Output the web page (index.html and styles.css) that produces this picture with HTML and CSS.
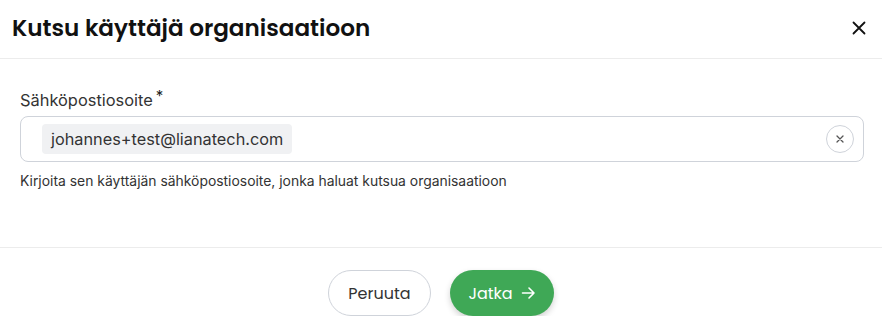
FILE: index.html
```html
<!DOCTYPE html>
<html lang="fi">
<head>
<meta charset="utf-8">
<title>Kutsu käyttäjä organisaatioon</title>
<link rel="stylesheet" href="styles.css">
</head>
<body>
<div class="modal">
  <header class="modal-header">
    <h1 class="modal-title">Kutsu käyttäjä organisaatioon</h1>
    <button class="close-btn" aria-label="Sulje">
      <svg width="14" height="14" viewBox="0 0 14 14"><path d="M1.5 1.5L12.5 12.5M12.5 1.5L1.5 12.5" stroke="#111" stroke-width="1.8" stroke-linecap="round"/></svg>
    </button>
  </header>
  <section class="modal-body">
    <label class="field-label">Sähköpostiosoite<span class="req">*</span></label>
    <div class="input-box">
      <span class="chip">johannes+test@lianatech.com</span>
      <button class="clear-btn" aria-label="Tyhjennä">
        <svg width="8" height="8" viewBox="0 0 8 8"><path d="M1 1L7 7M7 1L1 7" stroke="#555" stroke-width="1.3" stroke-linecap="round"/></svg>
      </button>
    </div>
    <p class="help">Kirjoita sen käyttäjän sähköpostiosoite, jonka haluat kutsua organisaatioon</p>
  </section>
  <footer class="modal-footer">
    <button class="btn btn-secondary">Peruuta</button>
    <button class="btn btn-primary">Jatka
      <svg width="15" height="14" viewBox="0 0 15 14"><path d="M1.5 7H13M8 2L13 7L8 12" stroke="#fff" stroke-width="1.6" fill="none" stroke-linecap="round" stroke-linejoin="round"/></svg>
    </button>
  </footer>
</div>
</body>
</html>
```
FILE: styles.css
```css
* { box-sizing: border-box; }
html, body { margin: 0; padding: 0; background: #fff; }
body { font-family: Inter, "Noto Sans", sans-serif; color: #2b2b2b; }

.modal { width: 882px; }

.modal-header {
  height: 59px;
  display: flex;
  align-items: center;
  justify-content: space-between;
  padding: 0 16px 0 12px;
  border-bottom: 1px solid #ececec;
}
.modal-title {
  margin: 0;
  font-family: "Poppins", "Open Sans", sans-serif;
  font-weight: 600;
  font-size: 23.1px;
  letter-spacing: 0;
  color: #111;
  padding-bottom: 2px;
}
.close-btn {
  border: 0; background: none; padding: 0; width: 14px; height: 14px;
  display: flex; align-items: center; justify-content: center; margin-top: -2px;
}

.modal-body {
  padding: 26px 18px 0 20px;
  height: 189px;
  border-bottom: 1px solid #ececec;
}
.field-label {
  display: block;
  font-size: 16.4px;
  color: #333;
  line-height: 22px;
  margin-bottom: 5px;
}
.req { font-size: 15px; vertical-align: 5px; margin-left: 3px; color: #222; }

.input-box {
  height: 46px;
  border: 1px solid #cfd3da;
  border-radius: 8px;
  display: flex;
  align-items: center;
  justify-content: space-between;
  padding: 0 9px 0 21px;
}
.chip {
  background: #f0f1f3;
  border-radius: 4px;
  padding: 0 9px;
  height: 30px;
  display: flex;
  align-items: center;
  font-size: 16.3px;
  color: #333;
}
.clear-btn {
  width: 28px; height: 28px;
  border-radius: 50%;
  border: 1px solid #cfd3da;
  background: #fff;
  display: flex; align-items: center; justify-content: center;
  padding: 0;
}
.help {
  margin: 11px 0 0;
  font-size: 13.9px;
  color: #333;
}

.modal-footer {
  display: flex;
  justify-content: center;
  gap: 19px;
  padding-top: 22px;
}
.btn {
  height: 46px;
  border-radius: 23px;
  font-family: "Poppins", "Open Sans", sans-serif;
  font-weight: 400;
  font-size: 16px;
  display: flex; align-items: center; justify-content: center; gap: 8px;
}
.btn-secondary {
  width: 103px;
  background: #fff;
  border: 1px solid #cfd3da;
  color: #333;
}
.btn-primary {
  width: 104px;
  background: #3fa856;
  border: 0;
  color: #fff;
  box-shadow: 0 3px 6px rgba(0,0,0,0.18);
}
```
